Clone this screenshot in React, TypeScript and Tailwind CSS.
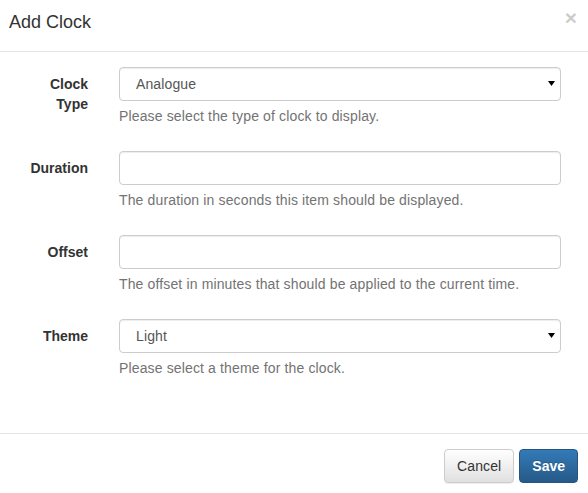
import React from "react";

const font = { fontFamily: '"Liberation Sans", Arial, sans-serif' };

function Arrow() {
  return (
    <svg width="7" height="5" viewBox="0 0 7 5" className="absolute right-[5px] top-[13px]">
      <path d="M0 0 H7 L3.5 5 Z" fill="#000" />
    </svg>
  );
}

function Group({
  label,
  help,
  value,
  select,
}: {
  label: string;
  help: string;
  value?: string;
  select?: boolean;
}) {
  return (
    <div className="flex mb-[15px]">
      <label className="w-[68px] ml-[20px] pt-[7px] text-right font-bold text-[14px] leading-[20px] text-[#333]">
        {label}
      </label>
      <div className="ml-[31px] w-[442px]">
        <div className="relative h-[34px] border border-[#ccc] rounded-[4px] bg-white shadow-[inset_0_1px_1px_rgba(0,0,0,0.075)] pl-[16px] text-[14px] tracking-[0.12px] leading-[32px] text-[#555]">
          {value}
          {select && <Arrow />}
        </div>
        <p className="mt-[5px] mb-[10px] text-[14px] tracking-[0.14px] leading-[20px] text-[#737373]">{help}</p>
      </div>
    </div>
  );
}

export default function App() {
  return (
    <div style={font} className="w-[588px] h-[493px] bg-white overflow-hidden text-[#333]">
      <div className="relative h-[52px] border-b border-[#e5e5e5] pl-[9px] pt-[10px]">
        <h4 className="text-[18px] leading-[25px] text-[#333]">Add Clock</h4>
        <span className="absolute right-[11px] top-[5px] text-[21px] font-bold leading-[25px] text-black opacity-20">
          ×
        </span>
      </div>
      <div className="pt-[15px] h-[381px]">
        <Group label="Clock Type" value="Analogue" select help="Please select the type of clock to display." />
        <Group label="Duration" help="The duration in seconds this item should be displayed." />
        <Group label="Offset" help="The offset in minutes that should be applied to the current time." />
        <Group label="Theme" value="Light" select help="Please select a theme for the clock." />
      </div>
      <div className="border-t border-[#e5e5e5] pt-[15px] pr-[10px] flex justify-end gap-[5px]">
        <button className="h-[34px] px-[12px] rounded-[4px] border border-[#ccc] bg-[linear-gradient(to_bottom,#fff_0%,#e0e0e0_100%)] text-[14px] tracking-[0.1px] text-[#333] shadow-[inset_0_1px_0_rgba(255,255,255,0.15),0_1px_1px_rgba(0,0,0,0.075)]">
          Cancel
        </button>
        <button className="h-[34px] px-[12px] rounded-[4px] border border-[#245580] bg-[linear-gradient(to_bottom,#337ab7_0%,#265a88_100%)] text-[14px] font-bold text-white [text-shadow:0_-1px_0_rgba(0,0,0,0.2)]">
          Save
        </button>
      </div>
    </div>
  );
}
